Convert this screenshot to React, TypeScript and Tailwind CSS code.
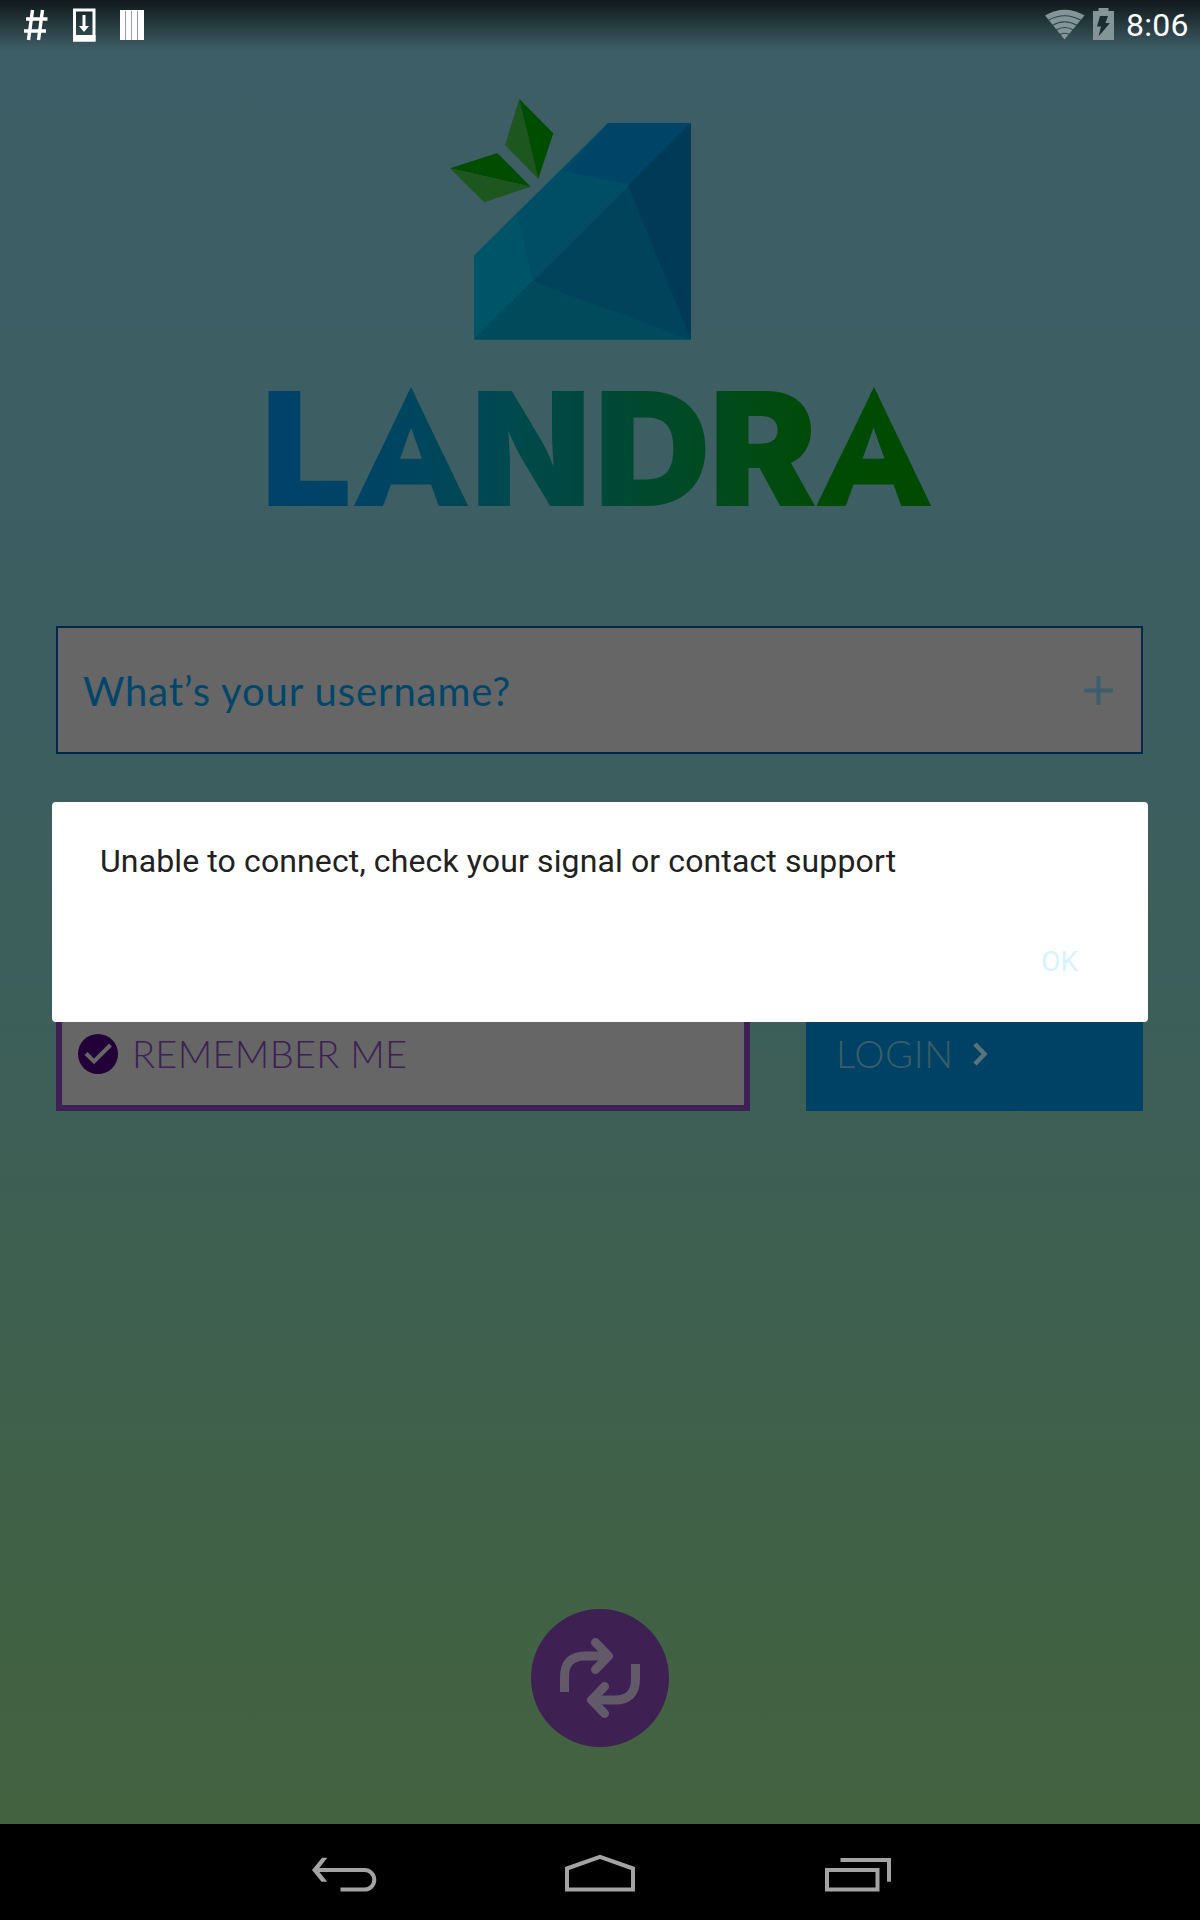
const wordmark = [
  { letter: "L", x: 261, width: 91 },
  { letter: "N", x: 471, width: 120 },
  { letter: "D", x: 594, width: 117 },
  { letter: "R", x: 709, width: 108 },
];

const pointedLetters = [354.5, 817];

function StatusBar() {
  return (
    <header className="flex h-[50px] shrink-0 items-start justify-between bg-linear-to-b from-black/75 to-transparent">
      <svg width="160" height="50" fill="none" stroke="#fff">
        <path d="M32.500 10 28.500 40M42.500 10l-4 30M26 19h21.500M24 31h22" strokeWidth="3.400" />
        <path d="M74.500 10h19.500v30H74.500z" strokeWidth="3" />
        <path d="M73 35h22.500v6.500H73z" fill="#fff" stroke="none" />
        <path d="M82.500 15h3v11h3.500l-5 6-5-6h3.500z" fill="#fff" stroke="none" />
        <path d="M120 10h24v30h-24z" fill="#fff" stroke="none" />
        <path d="M125.500 11v29M131.500 11v29M137.500 11v29" stroke="#8fa0a6" strokeWidth="1" />
      </svg>
      <div className="flex">
        <svg width="80" height="50" className="mr-[1px]">
          <path d="M0 15.500Q20 4 39.500 15.500L19.500 39.500z" fill="#84959a" />
          <path d="M3 20.500Q19.500 11 36.500 20.500M7 25.500Q19.500 18 32.500 25.500M11 30Q19.500 25 28.500 30M15 34.500Q19.500 32 24.500 34.500" stroke="#2d444b" strokeWidth="1.200" fill="none" />
          <path d="M48 11h5.500V8h10v3H69v29H48z" fill="#84959a" />
          <path d="M55 16h8l-2.500 7h4.500L53.500 36.500l2.500-10h-4z" fill="#1c2d32" />
        </svg>
        <span className="w-[74px] pt-[6px] font-['Roboto'] text-[32px] leading-[38px] tracking-[0.3px] text-white">8:06</span>
      </div>
    </header>
  );
}

function Logo() {
  return (
    <svg viewBox="240 90 720 480" width="720" height="480" className="mt-[40px] ml-[240px] shrink-0">
      <defs>
        <linearGradient id="wordmark" gradientUnits="userSpaceOnUse" x1="268" y1="0" x2="931" y2="0">
          <stop offset="0" stopColor="#00426a" />
          <stop offset="0.17" stopColor="#004464" />
          <stop offset="0.36" stopColor="#00494e" />
          <stop offset="0.48" stopColor="#00483c" />
          <stop offset="0.63" stopColor="#004a25" />
          <stop offset="0.83" stopColor="#004b05" />
          <stop offset="1" stopColor="#004b00" />
        </linearGradient>
        <clipPath id="apex">
          <path d="M354 506 411 387 468 506zM816.500 506 874 387 931 506z" />
        </clipPath>
      </defs>
      <path d="M608 123H691L474 339.500V255.700z" fill="#004d66" />
      <path d="M608 123H691L628 184 565 171z" fill="#004468" />
      <path d="M474 255.700 517.500 214 532.700 281.700 474 339.500z" fill="#005468" />
      <path d="M691 123V339.500H474z" fill="#00435b" />
      <path d="M691 123V339.500L628 185z" fill="#003a57" />
      <path d="M474 339.500 533 281.700 691 339.500z" fill="#004a5c" />
      <path d="M519.300 99 505 145 538.300 179z" fill="#1e5620" />
      <path d="M519.300 99 553.300 133.300 538.300 179z" fill="#004d00" />
      <path d="M450 168.300 497.300 153 530.700 186.700z" fill="#004d00" />
      <path d="M450 168.300 484.300 202.300 530.700 186.700z" fill="#1e5620" />
      <g fill="url(#wordmark)" fontFamily="Inter" fontWeight="900" fontSize="158">
        {wordmark.map(({ letter, x, width }) => (
          <text key={x} x={x} y="506" textLength={width} lengthAdjust="spacingAndGlyphs">
            {letter}
          </text>
        ))}
      </g>
      <g clipPath="url(#apex)" fill="url(#wordmark)" stroke="url(#wordmark)" strokeWidth="9" fontFamily="Lato" fontWeight="900" fontSize="160">
        {pointedLetters.map((x) => (
          <text key={x} x={x} y="508" textLength="113" lengthAdjust="spacingAndGlyphs">
            A
          </text>
        ))}
      </g>
    </svg>
  );
}

function LoginForm() {
  return (
    <section className="mt-[56px] flex flex-col pr-[57px] pl-[56px] font-['Lato']">
      <div className="flex h-[128px] items-center justify-between border-2 border-[#00284a] bg-[#666] pr-[28px] pl-[25px]">
        <span className="mt-[2px] text-[40px] leading-[50px] tracking-[0.9px] whitespace-nowrap text-[#00466b]">What’s your username?</span>
        <svg width="29" height="29" stroke="#3c5f6d" strokeWidth="4">
          <path d="M0 14.500h29M14.500 0v29" />
        </svg>
      </div>
      <div className="mt-[241px] flex justify-between">
        <div className="flex h-[116px] w-[694px] items-center border-[6px] border-[#3d2054] bg-[#666] pl-[16px]">
          <svg width="40" height="40" className="mt-[2px]">
            <circle cx="20" cy="20" r="20" fill="#220038" />
            <path d="M8 19.500 16 27.500 32.500 11" stroke="#666" strokeWidth="4" fill="none" />
          </svg>
          <span className="ml-[14px] text-[38px] leading-[46px] font-light tracking-[0.3px] whitespace-nowrap text-[#3d2054]">REMEMBER ME</span>
        </div>
        <div className="flex h-[116px] w-[337px] items-center bg-[#004266] pl-[30px]">
          <span className="text-[38px] leading-[46px] font-light tracking-[0.7px] text-[#3c5e66]">LOGIN</span>
          <svg width="16" height="24" className="mt-[1px] ml-[19px]" fill="none" stroke="#5a7379" strokeWidth="4.500">
            <path d="m2 2 9.500 10L2 22" />
          </svg>
        </div>
      </div>
    </section>
  );
}

function SyncButton() {
  return (
    <svg viewBox="-69 -69 138 138" width="138" height="138" className="mx-auto mt-[498px] shrink-0">
      <circle r="69" fill="#3e2052" />
      {["", "rotate(180)"].map((transform) => (
        <g key={transform} transform={transform} fill="none" stroke="#635a69" strokeWidth="9">
          <path d="M-35.500 14V-1Q-35.500-22-15-22H6" />
          <path d="M-4.500-35.500 8.500-22-4.500-8.500" strokeLinecap="round" strokeLinejoin="round" />
        </g>
      ))}
    </svg>
  );
}

function Dialog() {
  return (
    <div className="absolute top-[802px] left-[52px] flex h-[220px] w-[1096px] flex-col justify-between rounded-[4px] bg-white pt-[40px] pr-[70px] pb-[43px] pl-[48px] font-['Roboto']">
      <p className="text-[32px] leading-[38px] tracking-[0.12px] whitespace-nowrap text-[#212121]">Unable to connect, check your signal or contact support</p>
      <button className="self-end text-[28px] leading-[34px] text-[#d6f3ff]">OK</button>
    </div>
  );
}

function NavBar() {
  return (
    <nav className="flex h-[96px] shrink-0 bg-black">
      <svg viewBox="0 1824 1200 96" width="1200" height="96" fill="none" stroke="#a3a3a3" strokeWidth="4">
        <path d="M314 1870H364.500a9.800 9.800 0 0 1 0 19.600H340.500" />
        <path d="M312 1870 322 1857.700H327.300L317.800 1870 327.300 1881.700H321.500z" fill="#a3a3a3" stroke="none" />
        <path d="M567 1868.500 600 1856.800 633 1868.500V1889.600H567z" />
        <path d="M827 1870H877.500V1889.600H827zM840.500 1860H889V1881.700" />
      </svg>
    </nav>
  );
}

export default function App() {
  return (
    <div className="relative flex h-[1920px] w-[1200px] flex-col overflow-hidden bg-black">
      <main className="flex h-[1824px] shrink-0 flex-col bg-[linear-gradient(180deg,#3d5e66_0%,#3d5e60_40%,#3d5f57_60%,#406149_80%,#43623f_100%)]">
        <StatusBar />
        <Logo />
        <LoginForm />
        <SyncButton />
      </main>
      <NavBar />
      <Dialog />
    </div>
  );
}
